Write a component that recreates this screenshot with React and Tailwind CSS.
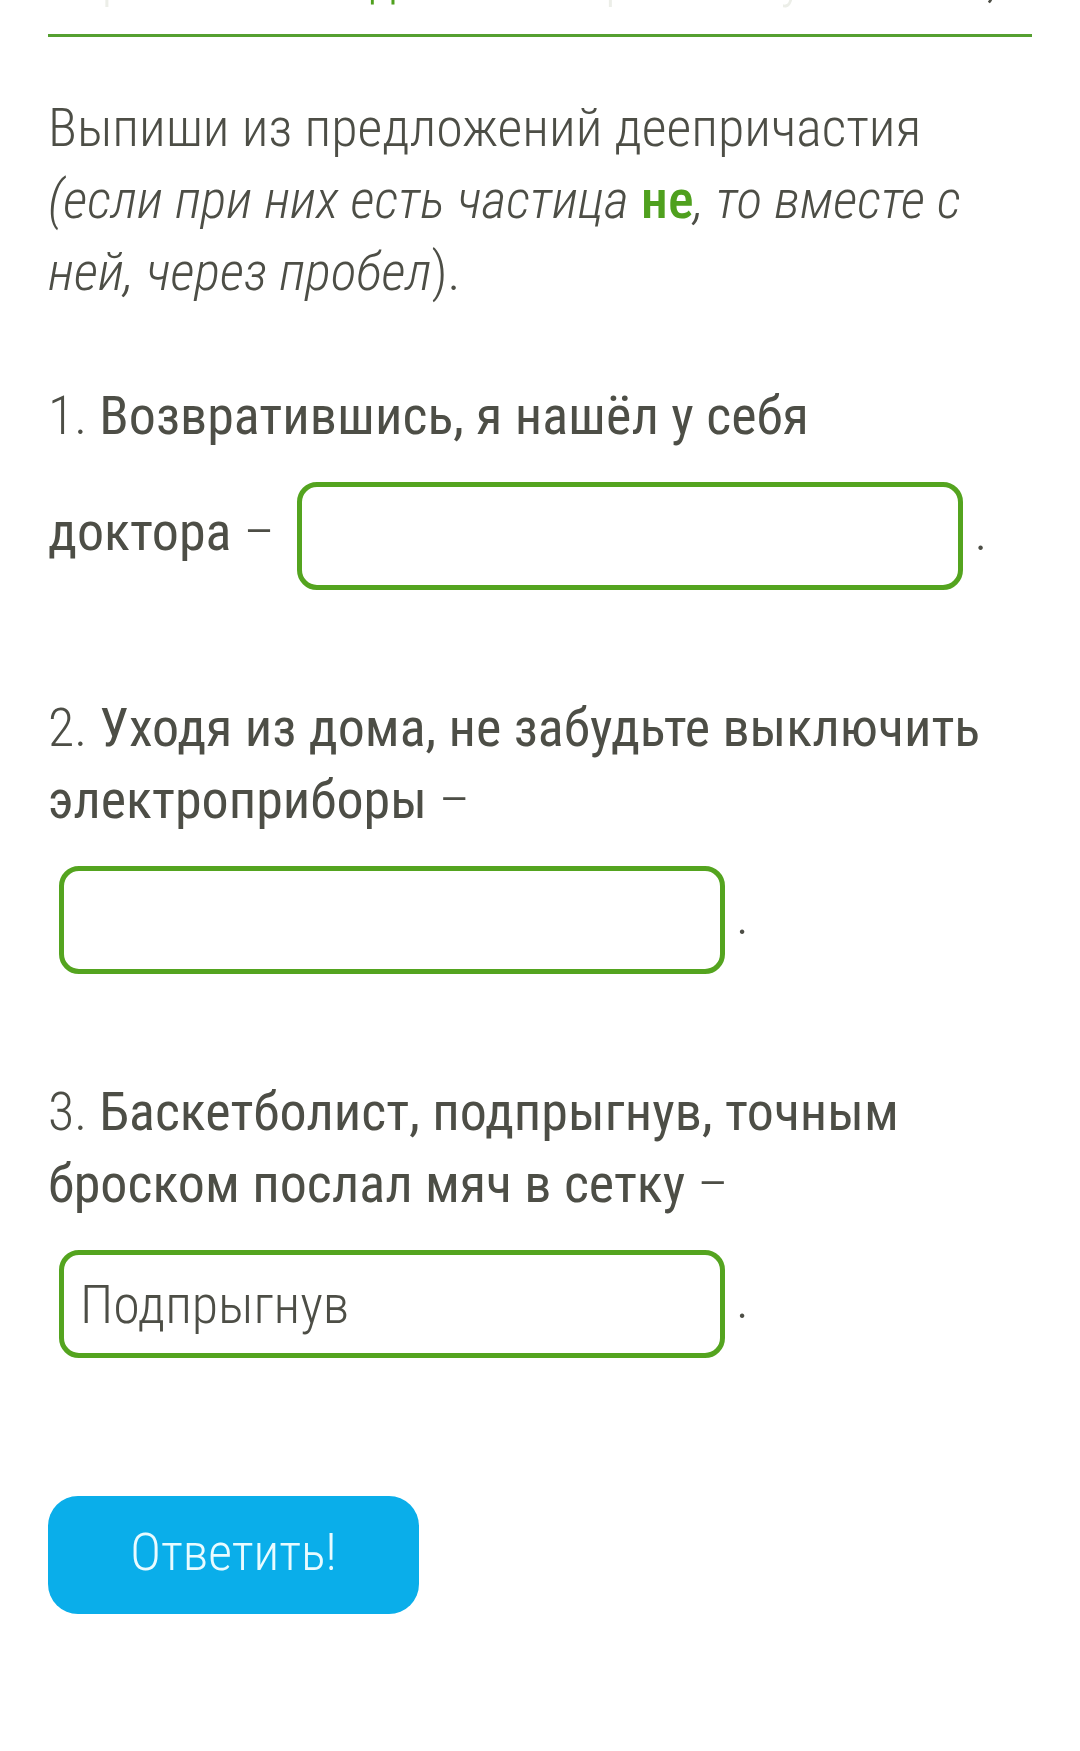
const FONT = "font-['Roboto_Condensed','Roboto','Liberation_Sans',sans-serif]";

function Blank({ value = "" }) {
  return (
    <input
      readOnly
      value={value}
      className="mx-[11px] my-[30px] box-border inline-block h-[108px] w-[666px] rounded-[20px] border-[5px] border-[#54a41f] bg-white pl-[16px] align-middle text-[54px] font-light text-[#4d4e46] outline-none"
    />
  );
}

function Item({ n, children, value }) {
  return (
    <div className="mt-[72px] text-[54px] leading-[72px]">
      <span className="font-light">{n}. </span>
      <span className="font-normal">{children}</span>
      <span className="font-light">{"\u00a0"}– </span>
      <Blank value={value} />
      <span className="font-light">.</span>
    </div>
  );
}

export default function App() {
  return (
    <div className={`${FONT} min-h-[1751px] bg-white px-[48px] text-[#4d4e46]`}>
      <div className="h-[34px] overflow-hidden">
        <p className="-mt-[58px] whitespace-nowrap text-[54px] font-light leading-[72px] text-[#eceee8]">
          Упражнение 1 <span className="text-[#4fa01e]">д</span> ответы приняты учителем<span className="text-[#4d4e46]">,</span>
        </p>
      </div>
      <div className="h-[3px] bg-[#55a031]" />

      <p className="mt-[55px] text-[54px] font-light leading-[72px]">
        Выпиши из предложений деепричастия{" "}
        <span className="italic">
          (если при них есть частица <span className="font-medium not-italic text-[#4fa01e]">не</span>, то вместе с ней, через пробел
        </span>
        ).
      </p>

      <Item n="1">Возвратившись, я нашёл у себя доктора</Item>
      <Item n="2">Уходя из дома, не забудьте выключить электроприборы</Item>
      <Item n="3" value="Подпрыгнув">Баскетболист, подпрыгнув, точным броском послал мяч в сетку</Item>

      <button className="mt-[108px] flex h-[118px] w-[371px] items-center justify-center rounded-[30px] bg-[#0aaeea] pb-[4px] text-[52px] font-light text-[#e9fbff]">
        Ответить!
      </button>
    </div>
  );
}
